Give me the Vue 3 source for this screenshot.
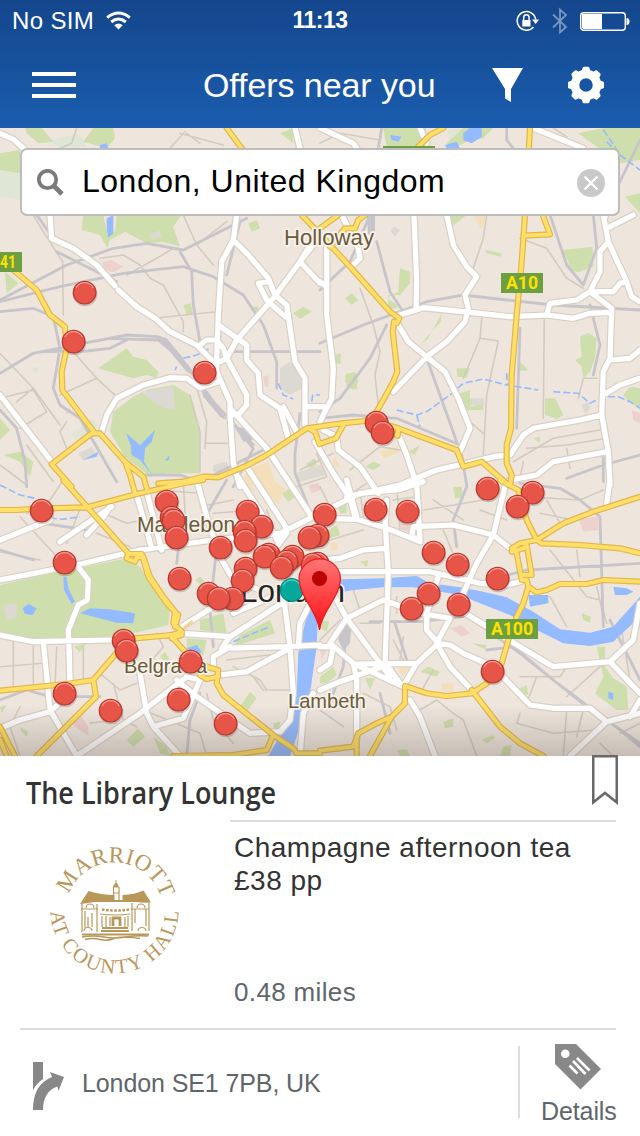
<script setup>
// Map geometry is surveyed in thirds of a pixel, in seven sheets with these origins.
const sheets = { A: [0, 215], B: [320, 215], C: [0, 480], D: [320, 480], E: [0, 0], F: [320, 0], G: [200, 370] }
const trace = (line) => {
  const [ox, oy] = sheets[line[0]]
  return 'M' + line.slice(1).trim().split(/\s+/).map((p) => {
    const [x, y] = p.split(',').map(Number)
    return (ox + x / 3).toFixed(1) + ' ' + (oy + y / 3).toFixed(1)
  }).join('L')
}
const lines = (text) => text.trim().split('\n').map((l) => trace(l.trim())).join('')
const areas = (text) => text.trim().split('\n').map((l) => trace(l.trim()) + 'Z').join('')

const parks = areas(`
A 250,0 310,0 320,45 345,50 350,0 545,0 520,35 540,95 490,80 440,85 375,50 330,75 322,100 300,60 245,45
A 340,590 400,545 440,525 520,510 570,540 600,640 600,775 500,775 450,785 375,725 330,650
A 295,460 380,400 400,425 440,435 475,470 470,490 440,480 400,490
A 15,170 55,205 20,235
A 0,610 30,645 0,675
A 10,720 60,710 100,740 90,785 60,740
A 745,25 770,15 780,40 755,50
A 880,295 910,275 935,290 900,312
A 550,270 572,265 580,300 560,300
A 750,275 775,275 775,290 755,288
A 920,750 945,730 950,750 930,760
C 240,265 380,235 420,260 450,310 510,390 505,435 400,460 330,480 200,480 100,480 0,455 0,315 200,270
C 560,475 620,480 610,525 560,520
C 600,420 670,400 680,460 600,450
C 720,465 810,420 825,460 700,500
C 480,530 495,515 510,540 495,545
C 720,680 750,635 770,655 740,695
C 380,780 415,745 435,770 400,800
C 460,770 500,800 510,828 480,820
C 60,740 85,755 80,770 65,755
C 220,500 260,490 240,515
C 0,680 20,675 5,700
C 820,730 840,725 835,760 825,755
C 585,300 600,290 630,320 615,325
G 435,15 465,5 475,35 460,60 440,50
G 185,310 205,298 218,318 200,330
G 245,370 270,355 285,380 265,395
G 495,290 520,275 545,285 520,300
G 320,280 345,265 350,280 325,292
G 415,405 440,395 440,430 420,430
G 385,480 410,465 420,495 390,505
B 240,160 270,170 270,205 240,240 205,240 205,285 240,275 200,250 235,230
B 75,250 95,235 115,255 95,270
B 725,105 818,95 820,155 775,172 750,165 745,140
B 495,105 545,115 542,125 500,115
B 780,365 805,355 830,370 825,430 810,470 790,490 785,455 765,435 785,425
B 365,295 362,320 300,390 325,370
B 80,475 115,475 110,525 75,500
B 45,420 62,415 62,447 48,445
B 410,460 450,460 440,488 412,485
B 420,535 450,525 450,575 490,565 490,585 430,585
B 600,440 625,465 600,468
B 675,550 705,550 730,600 710,612 675,600
B 910,540 930,515 960,520 960,575 930,565
B 380,0 440,0 395,35
B 640,670 660,665 660,685
B 265,710 300,690 285,720
D 0,590 40,560 50,585 20,610 0,610
D 135,595 165,595 150,630
D 830,500 855,500 855,560 880,595 920,620 925,690 890,690 850,660 825,640 850,590
D 400,20 425,20 430,55 405,55
D 300,575 325,560 360,575 350,590
D 370,725 400,715 400,740 375,745
D 600,625 620,615 625,645 600,640
D 485,780 520,765 525,775 500,790
D 120,245 145,240 140,262
D 785,400 812,410 810,428 790,420
D 455,490 500,495 495,508
D 0,420 28,425 20,455 0,445
D 230,810 260,808 270,828 240,828
D 550,800 575,795 570,828 540,828
E 0,460 60,450 60,520 0,510
E 75,384 125,384 160,425 115,430 80,400
E 280,384 340,384 345,415 320,445 250,425
E 840,400 880,384 880,430
F 190,384 320,384 290,440 200,440
F 380,430 430,384 520,384 490,415 440,425 400,445
F 775,400 850,384 960,384 960,480 900,490 830,440
F 915,590 960,580 960,640`)

const paleGreen = areas(`
A 210,660 280,610 295,640 240,680
E 0,510 60,520 60,600 0,590
E 150,420 240,400 260,440 180,445
F 380,390 440,384 430,425 390,420
A 90,460 120,455 110,475`)

const urban = areas(`
C 10,375 50,370 50,410 20,420
A 840,460 870,440 900,470 905,520 870,540 840,520
A 420,530 520,515 525,585 490,580
A 235,715 275,695 290,720 250,735
B 450,550 492,550 492,570 450,570
B 210,45 225,35 240,45 225,65
B 785,570 805,560 810,580 795,598
A 640,750 680,740 690,770 640,770
G 285,310 360,285 375,315 300,335
A 450,60 480,45 485,65 455,75`)

const sand = areas(`
G 155,295 205,275 225,335 255,355 235,405 200,370
G 130,315 145,310 165,365 150,360
G 395,270 405,260 420,290 405,290
G 540,245 595,230 590,250 550,265
G 390,520 410,515 415,535 395,545
D 230,558 265,560 250,590
D 365,610 400,610 400,635 365,630
F 460,645 495,645 490,680 480,685`)

const rose = areas(`
A 305,140 335,135 370,155 340,172 315,165
A 190,575 215,585 200,600
B 935,585 960,595 960,625 940,615
D 775,115 835,110 835,150 790,155
D 390,445 425,435 450,460 425,470
D 240,130 270,135 265,155 245,150
G 325,345 355,338 362,360 335,370
G 190,20 205,15 205,50 195,50
C 205,720 245,710 265,740 265,765 245,755
D 0,510 20,510 5,540`)

const water = areas(`
C 1150,295 1250,288 1290,310 1380,322 1450,335 1520,352 1600,395 1680,448 1770,458 1840,440 1920,350 1920,410 1840,485 1770,498 1690,490 1600,445 1530,405 1440,370 1380,345 1240,322 1150,322 1060,330 980,345 955,375 950,500 930,640 900,740 870,828 805,828 850,750 890,640 895,520 925,385 960,305 1030,298
C 68,385 85,372 110,385 98,405 75,402
C 240,400 270,385 330,388 405,400 400,430 350,428
C 190,290 200,290 205,325 225,365 215,372 192,330
A 320,10 340,0 340,55 325,68 320,40
A 378,655 420,690 465,645 455,680 435,700 432,740 455,778 420,735 395,720 392,690
A 495,735 510,720 505,737
A 250,735 295,710 290,725
F 430,400 450,384 485,384 485,410 455,430 430,420
F 375,435 410,425 420,445 380,445
F 210,405 245,410 235,425 215,420
E 300,435 320,430 325,445 300,445
D 880,320 920,325 940,335 920,345 885,345
D 625,345 685,345 685,370 630,380
C 560,505 590,495 605,515 590,525
D 865,635 880,640 880,660 865,655`)

const streams = lines(`
B 230,585 290,600 320,590 390,540 430,505 490,492 560,510 655,525
B 700,530 775,535 810,565 850,545 895,545 930,560 960,580
B 290,600 300,635
B 560,475 562,510
A 550,430 590,420 630,400
A 525,465 530,455
A 835,505 850,540 880,552
A 935,560 938,540 960,540
C 0,15 60,45 105,55
C 150,115 190,118 240,110
C 700,485 760,460 810,440
F 850,390 865,410 900,465 960,510
F 860,425 900,465`)

const lanes = lines(`
A 190,300 188,140 130,50 100,0
A 0,415 100,520 180,630
A 0,550 100,525 140,590 60,640
A 100,520 50,560
A 180,540 290,490 220,410
A 290,490 350,545
A 200,620 180,650 200,700
A 550,0 590,90 640,150
A 590,90 680,20
A 300,130 370,120 420,150 450,190 490,210 550,320 550,350
A 460,310 650,290
A 520,100 470,130 380,180
A 570,540 600,650 600,770
A 615,700 620,620 590,520
A 615,685 690,685
A 0,750 80,810
A 80,690 160,800
B 120,220 160,330 180,410 165,480 175,570
B 485,310 480,370 430,490
B 480,370 535,378 500,540 490,720
B 673,310 670,610
B 600,70 680,100 740,190 790,220
B 775,550 790,490 830,490
B 500,0 490,70 460,160
B 580,740 700,670 840,645
B 620,700 740,690 860,670
B 740,700 750,760
B 610,740 600,790
B 450,620 490,655
G 300,300 400,250
G 290,350 380,320 350,250
G 450,300 540,230 600,240
G 440,380 500,340
C 190,0 150,60 80,100
C 60,110 180,240
C 250,60 200,190
C 290,160 390,200
C 310,100 380,130 430,120
C 470,30 600,40
C 500,0 515,200
C 550,10 560,180
C 0,215 120,240
C 100,490 100,630
C 170,500 165,620
C 250,500 250,610
C 0,560 130,550
C 40,480 40,620
C 470,460 490,500 440,560
C 300,580 360,630 410,610
C 430,690 600,760 620,828
C 340,610 370,720 410,740
C 620,640 640,720 700,790
C 700,560 780,600 800,630
C 680,540 850,520
C 760,590 790,630 870,630
C 270,730 340,720 370,690
C 60,680 30,740 60,828
C 600,80 700,60
C 640,100 770,90
C 800,90 840,200
D 0,20 50,120
D 30,180 130,150
D 120,30 130,110
D 220,60 290,50
D 230,20 240,150
D 340,60 430,120
D 310,90 490,60
D 370,150 420,270
D 480,90 560,120
D 620,50 780,60 850,30
D 660,100 760,120
D 680,60 720,130
D 770,210 780,290
D 690,210 800,350 840,360 860,430
D 690,350 740,440
D 830,320 850,410
D 100,330 120,390
D 230,350 230,400
D 250,470 240,540
D 120,430 180,430
D 220,480 260,560
D 0,480 60,420
D 130,640 210,680 230,750
D 300,690 350,660 400,700 430,720 470,828
D 600,700 590,730 700,760 830,750
D 600,590 720,590 740,560
D 620,670 650,590
D 740,690 730,828
D 790,690 770,770
D 900,420 930,600
D 840,560 740,650
D 340,570 300,640
D 0,690 70,740
D 0,650 80,680
D 840,790 880,828
D 900,760 960,730
E 555,395 510,445
E 540,400 670,435
E 230,384 215,430 180,445
E 560,400 600,430
F 0,430 60,400 180,420
F 700,384 740,410`)

const rails = lines(`
A 0,290 100,280 160,305 180,400 160,520 180,570 240,610 350,800
A 0,260 180,215 370,175 550,155 640,185 730,240 790,330 830,440 830,520
A 0,255 200,150 340,100 440,85 550,105 640,60 740,10
A 0,475 100,415 250,385 380,360 470,365 560,450 640,560 760,690
A 250,385 330,370 475,375 540,430 630,545
A 130,410 260,408 330,400 380,375
A 540,110 575,170 580,270 600,380
A 960,410 780,410 660,410
A 110,0 160,70 300,160
A 170,110 350,200
A 720,20 680,180
A 710,640 760,700 700,815
A 0,585 50,640 75,740 80,815
A 440,780 540,780 600,800 800,700
B 0,385 130,330 320,260 430,240 560,255 700,270 960,285
B 0,225 90,140 150,0
B 170,80 210,230 250,290
B 200,330 150,430 60,550 0,590
B 0,610 100,600 230,610 420,690 440,810
B 320,430 410,680
B 690,0 740,150 790,210 830,100 820,0
B 810,270 840,390 820,480
B 600,340 590,640
B 850,710 850,800
B 740,790 850,750 960,720
G 300,130 285,250 285,310 325,410
G 10,450 80,330
C 540,170 530,250
C 640,500 630,390 650,200
C 560,828 570,720 600,640
C 130,130 260,150
C 0,210 100,240
C 0,660 80,630 150,650 300,650
D 440,20 400,120 410,200
D 600,10 720,25 780,60 840,110 850,440
D 430,320 620,270 960,250
D 80,430 70,560 40,640
D 150,425 300,425 430,410
D 430,400 600,520 800,680 960,790
D 870,420 930,540 960,600
D 500,510 580,500 700,600 900,750 960,800
D 225,430 260,540
D 180,640 210,760
F 185,384 175,445 150,645
F 560,384 560,420 580,445
F 960,420 900,545`)

const yards = areas(`
A 470,360 500,370 550,430 580,480 560,470 510,410
G 0,50 40,90 80,150 60,140 10,80
G 105,170 135,175 160,210 130,215
D 60,435 95,430 90,490 70,510 55,480
B 140,0 165,0 165,50 145,60`)

const streets = lines(`
E 0,400 40,418 110,480 150,645 155,715
A 150,0 155,70 220,100 290,150 345,212
A 355,225 410,275 465,310 510,350 590,390 640,440
E 885,384 900,445 710,600 710,645
A 710,0 700,75 665,140 655,300 650,430 650,470 690,560 690,600 700,745 720,815
A 700,75 740,115 805,190 825,240 860,270 885,440 915,490 915,630
A 960,65 900,140 820,250 710,375 680,430 640,450
A 930,90 900,140 960,205
A 805,200 775,205 800,255 855,305
A 600,390 620,375 650,375 670,400 680,430 740,540 740,570 715,600 690,600
A 655,330 740,390 740,435 775,475 780,540 840,580 865,670
A 850,575 890,650
G 95,120 200,235 335,440
G 100,300 165,400 230,505
G 140,290 260,475 230,510
G 345,215 400,310 450,385 465,440
G 370,180 410,200 415,240 480,290 535,370
G 318,110 370,110
A 655,500 600,518 560,490 510,488 430,510 350,550 320,600 305,650
A 0,540 155,740
B 20,100 20,300 40,460 35,550 20,580 0,620
B 0,200 20,215
B 65,0 115,100 120,130 100,150
B 282,0 290,200 288,285
B 240,300 310,278 430,290 570,305 680,300 760,310 810,295 870,292
B 380,0 400,90 440,155 470,185 435,240 445,280 435,320 380,380 320,425 220,530
B 235,330 265,380 320,425 375,470 415,550 450,640 420,710
B 680,300 690,265 770,255 810,230 880,230 900,205 920,200
B 850,0 865,80 840,110 840,170 810,230 875,280 870,430 850,470 845,600 865,710 870,810
B 865,80 920,200 935,245 960,260
B 860,40 940,0
B 870,435 930,430 960,405
B 850,540 900,510 960,490
B 845,600 780,615 640,640 610,660 570,720 520,725 440,745 350,765 240,810 80,845
B 240,670 260,720 290,810
B 570,795 650,780 700,740 860,710
C 335,80 180,185
C 0,180 150,120
C 260,165 310,110 330,80
C 0,300 230,255 420,210 640,180 840,160 940,110 1080,40 1200,28 1270,5
C 230,255 265,300 262,360 235,375 205,450 210,600
C 0,465 100,485 330,480
C 130,485 150,690 230,828
C 0,745 60,720 150,695 210,640 208,510
C 410,45 455,205
C 440,35 485,210
C 590,0 620,110 660,230 700,300 780,330
C 545,440 640,380
C 545,460 690,470 860,360
C 700,400 840,340
C 690,470 665,505 860,500 960,495
C 640,560 640,530 690,500
C 850,340 870,500 880,640 870,720 840,755 750,760 590,650 530,600
C 930,370 900,430 895,500
C 660,585 740,575 860,510
C 230,828 420,700 560,590 600,600
C 420,580 440,700 460,740 540,828
C 600,600 550,715 460,740
C 900,828 910,700 940,640
C 860,160 830,200 780,230
D 80,0 110,110
D 290,10 300,180 275,170 280,140
D 0,115 110,118 200,145 300,185
D 200,60 195,140
D 285,140 400,135 520,165 570,205
D 555,20 520,165 470,250 430,340 435,390
D 0,240 60,235 130,210 200,205
D 195,120 205,280 195,550
D 50,275 330,275 480,310 560,315 600,305
D 45,350 80,415 190,360 300,400 390,415 350,490
D 80,415 210,590
D 80,415 30,490 100,550 250,620
D 355,290 320,400 320,450 355,490 290,550 100,552
D 350,490 390,495 430,520 520,560 630,675 700,685 810,685 860,725 750,828
D 420,390 600,500 700,560 870,545 940,480 960,370
D 350,490 390,560 450,625
D 870,545 960,640
D 860,725 960,700
D 930,710 960,660
D 0,500 40,500 30,550 0,570
D 0,630 60,605 200,555 240,610
D 100,550 110,600 110,780
D 290,550 255,610
D 270,660 300,710 345,828
D 870,0 860,70
F 0,384 100,430 120,460
F 640,384 790,445 850,600 855,650
F 300,384 320,430`)

const trunk = lines(`
A 0,120 40,165 110,225 150,300 195,335 200,400 185,470 187,525 285,655 300,655 375,740 430,785 440,820
A 300,655 275,655 155,748 215,815
A 375,740 390,780 405,835
A 475,805 550,800 610,785 655,787 740,752 800,720 920,640 1025,625 1095,618 1130,590 1180,500 1192,470 1178,350 1182,320
E 680,384 725,445 905,645 995,740 1050,800 1170,935 1198,955 1190,970
B 0,40 55,0
B 30,95 75,40 105,40 115,15 135,0
B 170,620 235,640 410,705 430,755 485,740 565,810
B 235,640 233,662 215,655
G 325,175 345,185 358,222 408,205 430,165
F 630,384 615,645 605,785 590,945 575,1125 573,1285 560,1335 560,1390 575,1425 570,1455
B 668,0 690,58 612,62
C 0,90 50,90 125,85 260,82 410,42 550,10 610,0
C 190,0 385,220 380,235 405,245 410,232 430,230 450,290 490,350 525,395 520,430 545,455 515,465 405,475 370,495 280,600 200,612 0,632
C 390,222 425,222 445,290 500,370 535,405 525,440
C 280,600 288,650 110,828
C 510,465 560,520 620,560 655,570 650,610 670,645 820,765 880,805 890,820 960,820
C 545,455 545,465 515,475
C 600,585 620,597 655,590
C 0,740 45,828
C 0,780 20,828
C 820,765 800,810 700,825 520,828
D 540,0 595,30 620,120 650,180 730,130 820,95 960,50
D 650,180 665,190 780,195 900,205 960,220
D 650,180 600,190 575,205 590,220 605,300 620,300 625,320 650,337 680,330 720,312 800,312 850,300 960,305
D 575,215 610,205 620,195 635,285 605,285
D 625,320 610,370 590,410 565,480 545,550 500,610 455,640 380,648 320,640 255,618 255,670 215,710 170,730 115,760 100,800 0,812
D 215,710 150,828
D 110,770 110,828
D 455,630 540,740 600,790 670,828
F 290,445 330,405 370,384`)

const bridge = trace('C 530,462 575,425')

const places = [
  { name: 'Holloway', x: 284, y: 245, w: 90, size: 22 },
  { name: 'Marylebone', x: 137, y: 532, w: 110, size: 22 },
  { name: 'Belgravia', x: 124, y: 673, w: 83, size: 21 },
  { name: 'Lambeth', x: 288, y: 708, w: 78, size: 21 },
]
const shields = [
  { name: '41', x: -20, y: 252, w: 42, tx: 0, tw: 16 },
  { name: 'A10', x: 501, y: 273, w: 42, tx: 506, tw: 32 },
  { name: 'A100', x: 486, y: 619, w: 52, tx: 491, tw: 42 },
]
const offers = [
  [84, 292], [73, 341], [204, 372], [376, 422], [382, 432], [532, 492], [487, 488], [517, 506],
  [41, 510], [166, 501], [171, 517], [173, 520], [176, 537], [220, 547], [247, 511], [261, 526],
  [244, 531], [245, 540], [324, 514], [375, 509], [407, 511], [317, 535], [309, 537], [64, 562],
  [179, 578], [245, 568], [242, 580], [268, 554], [264, 556], [292, 556], [286, 561], [281, 567],
  [317, 563], [312, 564], [208, 593], [232, 598], [218, 598], [433, 552], [457, 564], [497, 578],
  [428, 593], [411, 608], [458, 604], [123, 640], [126, 650], [190, 661], [64, 693], [110, 710],
  [178, 699], [225, 723], [492, 671],
]
const teeth = [0, 45, 90, 135, 180, 225, 270, 315]
</script>

<template>
  <main class="screen">
    <header class="top">
      <div class="status">
        <div class="carrier">
          <span>No SIM</span>
          <svg width="25" height="19" viewBox="0 0 25 19" fill="none" stroke="#fff" stroke-width="3">
            <path d="M1.2 6.6Q12.5-2.6 23.8 6.6" />
            <path d="M5.2 11Q12.500 5 19.800 11" />
            <path d="M8.300 14.300Q12.500 10.900 16.700 14.300L12.500 18.500Z" fill="#fff" stroke="none" />
          </svg>
        </div>
        <b class="clock">11:13</b>
        <div class="indicators">
          <svg width="24" height="22" viewBox="0 0 24 22" fill="none" stroke="#fff" stroke-width="1.500">
            <path d="M17.500 17A9.300 9.300 0 1 1 19.700 9.500" />
            <path d="M16 9.500h7.200l-3.600 4.500z" fill="#fff" stroke="none" />
            <path d="M6.300 10h8.200v6.500H6.300z" fill="#fff" stroke="none" />
            <path d="M7.700 10V7.500a2.700 2.700 0 0 1 5.400 0V10" />
          </svg>
          <svg width="16" height="28" viewBox="0 0 16 28" fill="none" stroke="#7896c2" stroke-width="1.800">
            <path d="M1 7.500 14 20 8 25.500V2.500L14 8 1 20.500" />
          </svg>
          <svg width="50" height="20" viewBox="0 0 50 20">
            <rect x=".7" y="1.700" width="44.600" height="17.600" rx="3" fill="none" stroke="#fff" stroke-width="1.400" />
            <path d="M2 3h20v15H4q-2 0-2-2z" fill="#fff" />
            <path d="M46.500 7q3 0 3 3.500t-3 3.500z" fill="#fff" />
          </svg>
        </div>
      </div>
      <nav class="bar">
        <div class="menu"><i></i><i></i><i></i></div>
        <h1>Offers near you</h1>
        <svg class="funnel" width="32" height="34" viewBox="0 0 32 34">
          <path d="M0 0h31L19 21v13l-6-3.500V21z" fill="#fff" />
        </svg>
        <svg class="gear" width="36" height="38" viewBox="-18 -19 36 38">
          <path v-for="a in teeth" :key="a" :transform="`rotate(${a})`" d="M-2-18.200h4q1.500 0 2 3l2 5h-12l2-5q.5-3 2-3z" fill="#fff" />
          <circle r="11" fill="none" stroke="#fff" stroke-width="8.500" />
        </svg>
      </nav>
    </header>

    <section class="map">
      <svg class="chart" width="640" height="628" viewBox="0 128 640 628">
        <defs>
          <linearGradient id="shade" x1="0" y1="0" x2="0" y2="1">
            <stop offset="0" stop-color="#54453f" stop-opacity="0" />
            <stop offset="1" stop-color="#54453f" stop-opacity=".26" />
          </linearGradient>
          <linearGradient id="pin" x1="0" y1="0" x2="0" y2="1">
            <stop offset="0" stop-color="#ff7676" />
            <stop offset=".65" stop-color="#ff3436" />
            <stop offset="1" stop-color="#e81018" />
          </linearGradient>
        </defs>
        <rect y="128" width="640" height="628" fill="#eee6dd" />
        <path :d="paleGreen" fill="#dfe6d5" />
        <path :d="parks" fill="#cfdead" />
        <path :d="urban" fill="#dcd8d2" />
        <path :d="sand" fill="#f3dfb9" />
        <path :d="rose" fill="#edd1cd" />
        <g fill="none" stroke-linejoin="round" stroke-linecap="round">
          <path :d="lanes" stroke="#d3cbc0" stroke-width="1.600" />
          <path :d="rails" stroke="#c7c5ca" stroke-width="2.800" />
          <path :d="streams" stroke="#94baff" stroke-width="1.600" stroke-dasharray="7 3" stroke-linecap="butt" />
        </g>
        <path :d="yards" fill="#c7c5ca" />
        <path :d="water" fill="#94baff" />
        <g fill="none" stroke-linejoin="round" stroke-linecap="round">
          <path :d="streets" stroke="#d8d0c6" stroke-width="7.600" />
          <path :d="streets" stroke="#fff" stroke-width="5.200" />
          <path :d="bridge" stroke="#f5d08a" stroke-width="2.500" />
          <path :d="trunk" stroke="#e0b64e" stroke-width="6.200" />
          <path :d="trunk" stroke="#ffdf67" stroke-width="3.800" />
        </g>
        <rect x="383" y="146" width="52" height="4" fill="#6c9f40" />
        <g v-for="s in shields" :key="s.name">
          <rect :x="s.x" :y="s.y" :width="s.w" height="20" fill="#6c9f40" />
          <text class="shield" :x="s.tx" :y="s.y + 16" :textLength="s.tw" lengthAdjust="spacingAndGlyphs">{{ s.name }}</text>
        </g>
        <text v-for="p in places" :key="p.name" class="place" :x="p.x" :y="p.y" :textLength="p.w" lengthAdjust="spacingAndGlyphs" :font-size="p.size">{{ p.name }}</text>
        <text class="city" x="240" y="602" textLength="105" lengthAdjust="spacingAndGlyphs">London</text>
        <rect y="705" width="640" height="51" fill="url(#shade)" />
        <g v-for="(o, i) in offers" :key="i" :transform="`translate(${o[0] + 0.6} ${o[1] + 0.6})`">
          <circle cx=".5" cy="1.500" r="12.200" fill="#4a332a" opacity=".22" />
          <circle r="11.300" fill="#e75448" stroke="#b9382f" stroke-width="1.300" />
          <path d="M-8.700-4.600A9.800 9.800 0 0 1 8.700-4.600" fill="none" stroke="#f39a91" stroke-width="1.200" />
        </g>
        <circle cx="291.700" cy="590" r="11.300" fill="#05a99b" stroke="#078a80" stroke-width="1.300" />
        <path d="M283 585.400a9.800 9.800 0 0 1 17.400 0" fill="none" stroke="#5accc2" stroke-width="1.200" />
        <path d="M319.500 630C317.500 611 299 597 299 578a20.800 20.500 0 0 1 41.500 0C340.500 597 321.500 611 319.500 630Z" fill="url(#pin)" stroke="#f0141c" stroke-width="1.200" />
        <circle cx="319.500" cy="578.500" r="7.600" fill="#bd0206" />
      </svg>
      <div class="search">
        <svg width="27" height="27" viewBox="0 0 27 27" fill="none" stroke="#7b7b7b">
          <circle cx="10.500" cy="10.500" r="8.700" stroke-width="3.800" />
          <path d="M16.500 16.500 25 25" stroke-width="4.600" />
        </svg>
        <span>London, United Kingdom</span>
        <svg class="clear" width="28" height="28" viewBox="0 0 28 28">
          <circle cx="14" cy="14" r="14" fill="#c9c9c9" />
          <path d="M7.500 7.500l13 13m0-13-13 13" stroke="#fff" stroke-width="2.400" />
        </svg>
      </div>
    </section>

    <article class="card">
      <svg class="bookmark" width="26" height="50" viewBox="0 0 26 50">
        <path d="M1.200 1.200h23.600v46.200L13 38 1.200 47.400z" fill="#fff" stroke="#696969" stroke-width="2.600" />
      </svg>
      <h2><span>The Library Lounge</span></h2>
      <div class="offer">
        <svg class="logo" width="170" height="150" viewBox="30 835 170 150">
          <defs>
            <path id="upper" d="M66 911A48.500 48.500 0 0 1 163 911" />
            <path id="lower" d="M50.500 909.500A64 64 0 0 0 178.500 909.500" />
          </defs>
          <g class="ring">
            <text font-size="23"><textPath href="#upper" startOffset="17" textLength="122">MARRIOTT</textPath></text>
            <text font-size="20.500"><textPath href="#lower" startOffset="2" textLength="197">AT COUNTY HALL</textPath></text>
          </g>
          <g fill="#b9975b">
            <path d="M88.500 891l-8.500 13q6-.5 14-2h42q8 1 15 .5L143.500 890.500q-9 4-21 4.500v5h-8v-5q-13 0-26-4z" />
            <path d="M115.500 880h1v3q2 1 2.500 4.500h-6q.4-3.500 2.500-4.500z" />
          </g>
          <g fill="none" stroke="#b9975b" stroke-width="1.200">
            <path d="M113.500 887v13m5.500-13v13m-5.500-7h5.500M82 904v28m3-21v17m12-24v28m-9-15v10m4-14v14m40-24v28m17-28v28m-3-22v17m-11-17v14M81 909h17m33 0h18" />
            <path d="M86 908a4 4 0 0 1 8 0m43 0a4 4 0 0 1 8 0M84 931a4 3.500 0 0 1 8 0m46 0a4 3.500 0 0 1 8 0" />
            <path d="M102 909.500q13 2 27 0" stroke-width="2.400" stroke-dasharray="2.600 1.500" />
            <path d="M100 914q15 2 30 0M102 916v11m4-11v11m4-10v9m15-9v10m3-11v11" />
            <path d="M113 926v-8h7v8" stroke-width="2.800" />
            <path d="M102 928h26m-27 3h28M82 934.500h67" stroke-width="1.900" />
            <path d="M82 937q12-2 22 0t22 0 22-1M85 939.500q8-2 15 0t14-1 26 0" stroke-width="1.500" />
          </g>
        </svg>
        <div class="facts">
          <p class="deal">Champagne afternoon tea<br /><span>£38 pp</span></p>
          <p class="miles">0.48 miles</p>
        </div>
      </div>
      <footer>
        <svg width="32" height="48" viewBox="0 0 32 48" fill="#888">
          <path d="M0 0h10v17Q4 21 0 28z" />
          <path d="M0 48h10c0-11 4-20 14.500-23.500L25.500 29 31 15 17 10l2 5C6 20 0 31 0 48z" />
        </svg>
        <address>London SE1 7PB, UK</address>
        <div class="details">
          <svg width="46" height="46" viewBox="0 0 46 46">
            <path d="M0 0h21l25 25-20.500 20.500L0 20z" fill="#888" />
            <circle cx="10.300" cy="9.800" r="4.300" fill="#fff" />
            <path d="M22 14 34.500 26.500M18 17 30.500 30M14.500 21.500 22.500 29.500" stroke="#fff" stroke-width="2.700" />
          </svg>
          <span>Details</span>
        </div>
      </footer>
    </article>
  </main>
</template>

<style>
body { margin: 0; background: #fff; }
</style>

<style scoped>
.screen { width: 640px; height: 1136px; overflow: hidden; font-family: "Liberation Sans", Arial, sans-serif; background: #fff; }
svg { display: block; flex: none; }
.top { height: 128px; box-sizing: border-box; background: linear-gradient(#14468c, #1a5dae); color: #fff; }
.status { display: grid; grid-template-columns: 1fr auto 1fr; height: 41px; align-items: center; padding: 0 10px 0 12px; font-size: 24px; }
.carrier { display: flex; gap: 12px; align-items: center; letter-spacing: .35px; }
.clock { position: relative; left: -1px; font-size: 23px; letter-spacing: -.5px; }
.indicators { display: flex; justify-content: flex-end; align-items: center; gap: 12px; }
.bar { display: flex; height: 87px; align-items: center; padding: 0 36px 0 32px; }
.menu { width: 44px; display: grid; gap: 7px; }
.menu i { height: 4px; background: #fff; }
h1 { margin: 0 0 0 127px; width: 289px; font-size: 34px; font-weight: 400; letter-spacing: -.08px; line-height: 40px; white-space: nowrap; }
.gear { margin-left: 44px; }
.map { position: relative; height: 628px; overflow: hidden; }
.search { position: absolute; left: 20px; top: 20px; width: 600px; height: 68px; box-sizing: border-box; border: 2px solid #bdbdbd; border-radius: 7px; background: #fff; display: flex; align-items: center; padding: 0 13px 0 15px; font-size: 32px; color: #000; }
.search span { margin: -2px 0 0 18px; letter-spacing: .5px; white-space: nowrap; }
.search .clear { margin-left: auto; margin-top: 2px; }
.place { font-family: "Liberation Sans", Arial, sans-serif; fill: #6b5b3c; stroke: #f7f2eb; stroke-width: 3.5px; paint-order: stroke; stroke-linejoin: round; }
.city { font-size: 31px; fill: #242424; stroke: #f7f2eb; stroke-width: 3px; paint-order: stroke; }
.shield { font: bold 18px Roboto, sans-serif; fill: #ffe000; }
.card { position: relative; height: 380px; background: #fff; }
.bookmark { position: absolute; right: 22px; top: -1px; }
h2 { margin: 0; height: 64px; padding: 16px 0 0 26px; box-sizing: border-box; font: 600 31px/40px "Open Sans", "Noto Sans", sans-serif; color: #333; }
h2 span { display: inline-block; transform-origin: left; transform: scaleX(.87); white-space: nowrap; }
.offer { display: flex; height: 208px; margin: 0 24px 0 20px; border-bottom: 2px solid #dcdcdc; }
.logo { margin: 15px 30px 0 10px; }
.facts { width: 386px; border-top: 2px solid #dcdcdc; box-sizing: border-box; padding: 9px 0 0 4px; }
p { margin: 0; }
.deal { height: 132px; font-size: 28px; line-height: 33px; color: #333; letter-spacing: .5px; white-space: nowrap; }
.miles { margin-top: 14px; font-size: 26px; line-height: 30px; color: #5f666b; letter-spacing: .35px; }
footer { display: flex; padding: 16px 20px 0 33px; color: #5f666b; font-size: 25px; }
footer > svg { margin-top: 16px; }
address { margin: 22px 0 0 17px; font-style: normal; letter-spacing: -.1px; line-height: 30px; width: 436px; white-space: nowrap; }
.details { width: 100px; flex: none; height: 72px; box-sizing: border-box; border-left: 2px solid #dcdcdc; padding-left: 21px; }
.details svg { margin: -2px 0 0 14px; }
.details span { display: block; margin-top: 6px; line-height: 30px; letter-spacing: -.1px; }
.ring { font-family: "Liberation Serif", "Times New Roman", serif; fill: #b9975b; }
</style>
